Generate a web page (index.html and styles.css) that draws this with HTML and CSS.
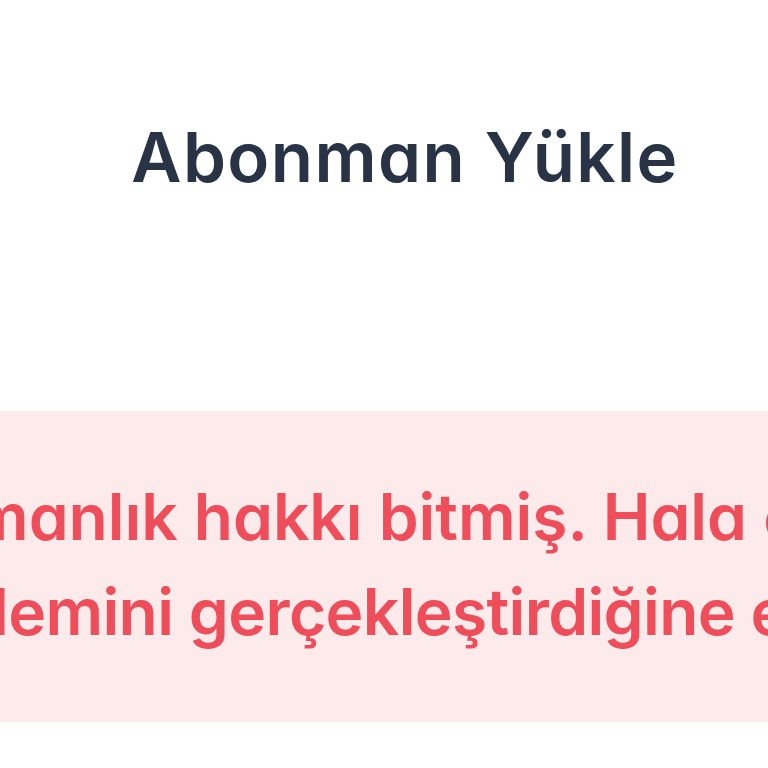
FILE: index.html
```html
<!DOCTYPE html>
<html lang="tr">
<head>
<meta charset="utf-8">
<title>Abonman Yükle</title>
<link rel="stylesheet" href="styles.css">
</head>
<body>
<div class="page">
  <header class="head">
    <h1 class="title">Abonman Yükle</h1>
  </header>
  <section class="alert">
    <p class="alert-text">
      <span class="line line-1">manlık hakkı bitmiş. Hala ödeme</span>
      <span class="line line-2">lemini gerçekleştirdiğine emin</span>
    </p>
  </section>
</div>
</body>
</html>
```

FILE: styles.css
```css
html, body {
  margin: 0;
  padding: 0;
  background: #ffffff;
}

.page {
  width: 768px;
  height: 768px;
  overflow: hidden;
  font-family: "Inter", "Noto Sans", sans-serif;
  font-feature-settings: "cv11" 1, "ss03" 1;
}

.head {
  height: 411px;
  display: flex;
  justify-content: center;
}

.title {
  margin: 0;
  padding-top: 112px;
  padding-left: 42px;
  font-size: 69px;
  line-height: 90px;
  font-weight: 600;
  color: #283346;
  letter-spacing: 1.4px;
}

.alert {
  height: 311px;
  background: #fdebec;
  overflow: hidden;
}

.alert-text {
  margin: 0;
  padding-top: 58px;
  display: flex;
  flex-direction: column;
  font-size: 64px;
  line-height: 95px;
  font-weight: 600;
  color: #ef4d5a;
  white-space: nowrap;
}

.line-1 {
  margin-left: -29px;
}

.line-2 {
  margin-left: -8px;
  letter-spacing: -0.6px;
}
```
